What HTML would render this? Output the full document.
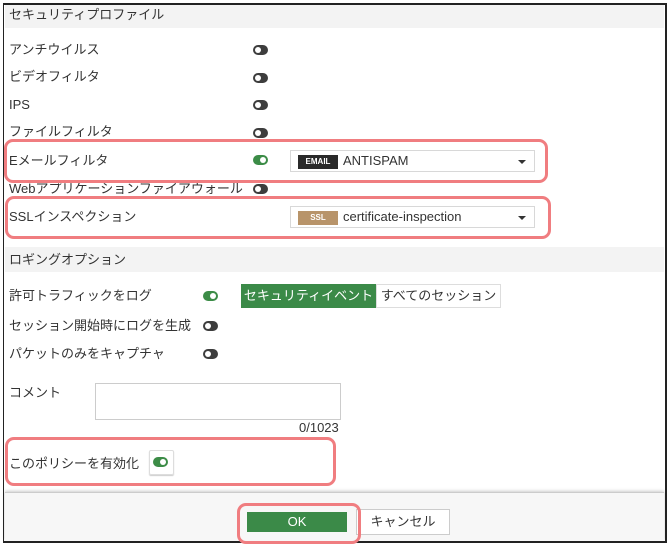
<!DOCTYPE html>
<html><head><meta charset="utf-8"><style>
body{margin:0;width:670px;height:546px;background:#fff;position:relative;overflow:hidden;font-family:"Liberation Sans","Noto Sans CJK JP",sans-serif;font-size:13px;color:#333}
.a{position:absolute;white-space:nowrap}
.frame{position:absolute;left:3px;top:3px;width:661px;height:536px;border:2px solid #222;border-left-width:1.5px}
.hdr{position:absolute;left:5px;width:659px;background:#f3f3f3}
.lbl{position:absolute;left:9px;line-height:16px}
.tg{position:absolute;width:15px;height:10px;border-radius:5px;background:#3d3d3d}
.tg::after{content:"";position:absolute;left:2px;top:2px;width:6px;height:6px;border-radius:50%;background:#fff}
.tg.on{background:#3c8c47}.tg.on::after{left:7px}
.red{position:absolute;border:3.5px solid #f07d80;border-radius:9px;box-sizing:border-box}
.sel{position:absolute;left:290px;width:245px;height:22px;border:1px solid #d8d8d8;background:#fff;box-sizing:border-box}
.badge{position:absolute;left:7px;top:4px;width:40px;height:14px;color:#fff;font-size:8px;text-align:center;line-height:14px;font-weight:bold}
.sel .t{position:absolute;left:52px;top:2px;font-size:13px}
.sel .ar{position:absolute;right:8px;top:9px;width:0;height:0;border-left:4px solid transparent;border-right:4px solid transparent;border-top:4px solid #333}
</style></head><body>
<div class="hdr" style="top:5px;height:23px"></div>
<div class="hdr" style="top:247px;height:25px"></div>
<div class="a" style="left:5px;top:492px;width:659px;height:48px;background:#f7f7f7;border-top:1px solid #ccc;box-shadow:0 -1px 3px #ccc"></div>
<div class="frame"></div>

<div class="lbl" style="top:7px">セキュリティプロファイル</div>
<div class="lbl" style="top:42px">アンチウイルス</div><div class="tg" style="left:253px;top:45px"></div>
<div class="lbl" style="top:69px">ビデオフィルタ</div><div class="tg" style="left:253px;top:73px"></div>
<div class="lbl" style="top:97px">IPS</div><div class="tg" style="left:253px;top:100px"></div>
<div class="lbl" style="top:124px">ファイルフィルタ</div><div class="tg" style="left:253px;top:128px"></div>
<div class="lbl" style="top:153px">Eメールフィルタ</div><div class="tg on" style="left:253px;top:155px"></div>
<div class="sel" style="top:150px"><div class="badge" style="background:#2a2a2a">EMAIL</div><div class="t">ANTISPAM</div><div class="ar"></div></div>
<div class="lbl" style="top:181px">Webアプリケーションファイアウォール</div><div class="tg" style="left:253px;top:184px"></div>
<div class="lbl" style="top:209px">SSLインスペクション</div>
<div class="sel" style="top:206px"><div class="badge" style="background:#b8946a">SSL</div><div class="t">certificate-inspection</div><div class="ar"></div></div>

<div class="lbl" style="top:252px">ロギングオプション</div>
<div class="lbl" style="top:288px">許可トラフィックをログ</div><div class="tg on" style="left:203px;top:291px"></div>
<div class="a" style="left:241px;top:284px;width:135px;height:24px;background:#3b8a48;color:#fff;line-height:24px;text-align:center">セキュリティイベント</div>
<div class="a" style="left:376px;top:284px;width:123px;height:22px;border:1px solid #ddd;line-height:22px;text-align:center">すべてのセッション</div>
<div class="lbl" style="top:318px">セッション開始時にログを生成</div><div class="tg" style="left:203px;top:321px"></div>
<div class="lbl" style="top:346px">パケットのみをキャプチャ</div><div class="tg" style="left:203px;top:349px"></div>

<div class="lbl" style="top:385px">コメント</div>
<div class="a" style="left:95px;top:383px;width:244px;height:35px;border:1px solid #ccc"></div>
<div class="a" style="left:299px;top:420px">0/1023</div>
<div class="lbl" style="top:456px">このポリシーを有効化</div>
<div class="a" style="left:149px;top:450px;width:23px;height:23px;border:1px solid #ddd;border-radius:2px;box-shadow:0 1px 1px #ccc"></div>
<div class="tg on" style="left:153px;top:457px"></div>

<div class="a" style="left:247px;top:512px;width:100px;height:20px;background:#3b8a48;color:#fff;text-align:center;line-height:20px">OK</div>
<div class="a" style="left:356px;top:509px;width:92px;height:24px;background:#fff;border:1px solid #ccc;text-align:center;line-height:24px">キャンセル</div>

<div class="red" style="left:4px;top:139px;width:544px;height:44px"></div>
<div class="red" style="left:5px;top:196px;width:546px;height:43px"></div>
<div class="red" style="left:5px;top:437px;width:331px;height:49px"></div>
<div class="red" style="left:237px;top:503px;width:124px;height:41px"></div>
</body></html>
